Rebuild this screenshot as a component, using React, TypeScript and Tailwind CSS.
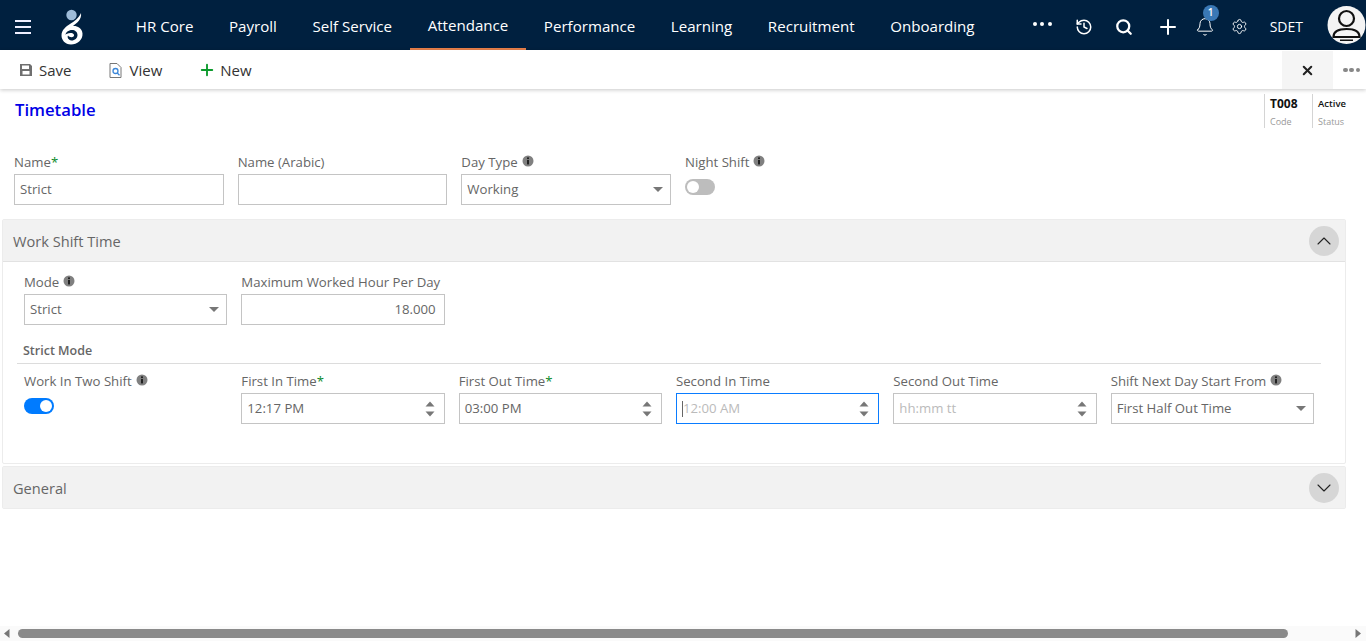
import React from "react";
import { ChevronDown, ChevronUp, History, Search, Plus, Bell, Settings, X } from "lucide-react";

const FONT = "font-['Open_Sans','Noto_Sans',sans-serif]";
const NAV = ["HR Core", "Payroll", "Self Service", "Attendance", "Performance", "Learning", "Recruitment", "Onboarding"];

function Info() {
  return (
    <svg width="12" height="12" viewBox="0 0 12 12" className="ml-[4px] shrink-0">
      <circle cx="6" cy="6" r="5.5" fill="#808080" />
      <rect x="5" y="2.4" width="2" height="1.7" fill="#222" />
      <rect x="5" y="5" width="2" height="4.4" fill="#222" />
    </svg>
  );
}

function Label({ text, req, info }: { text: string; req?: boolean; info?: boolean }) {
  return (
    <div className="flex h-[21px] items-start whitespace-nowrap text-[13.2px] leading-[18px] text-[#666]">
      <span>{text}</span>
      {req && <span className="text-[#0a8a2a]">*</span>}
      {info && <span className="mt-[2px]"><Info /></span>}
    </div>
  );
}

function Box({ children, focus }: { children?: React.ReactNode; focus?: boolean }) {
  return (
    <div className={`flex h-[31px] items-center border px-[5px] text-[13.2px] text-[#666] ${focus ? "border-[#0a7cff]" : "border-[#c4c4c4]"}`}>
      {children}
    </div>
  );
}

function Caret() {
  return (
    <svg width="10" height="5" viewBox="0 0 10 5" className="ml-auto mr-[2px] shrink-0">
      <path d="M0 0H10L5 5Z" fill="#777" />
    </svg>
  );
}

function Spin() {
  return (
    <svg width="10" height="16" viewBox="0 0 10 16" className="ml-auto mr-[4px] shrink-0">
      <path d="M0.5 5.500L5 0.500L9.500 5.500Z" fill="#777" />
      <path d="M0.5 10.500H9.500L5 15.500Z" fill="#777" />
    </svg>
  );
}

function Toggle({ on }: { on?: boolean }) {
  return (
    <div className={`flex h-[16px] w-[30px] items-center rounded-full px-[2px] ${on ? "justify-end bg-[#007bff]" : "justify-start bg-[#bdbdbd]"}`}>
      <div className="h-[12px] w-[12px] rounded-full bg-white" />
    </div>
  );
}

function PanelHeader({ title, open }: { title: string; open?: boolean }) {
  return (
    <div className={`flex items-center bg-[#f2f2f2] pl-[10px] pr-[6px] ${open ? "h-[42px] border-b border-[#e2e2e2]" : "h-[41px]"}`}>
      <span className="pt-[2px] text-[14.600px] text-[#666]">{title}</span>
      <div className="ml-auto flex h-[30px] w-[30px] items-center justify-center rounded-full bg-[#d6d6d6]">
        {open ? <ChevronUp size={24} strokeWidth={1.100} color="#222" /> : <ChevronDown size={24} strokeWidth={1.100} color="#222" />}
      </div>
    </div>
  );
}

function Logo() {
  return (
    <svg width="30" height="40" viewBox="0 0 30 40" className="shrink-0">
      <circle cx="13.5" cy="10" r="5.200" fill="#9dbbd8" />
      <path
        d="M23 8C24 14 19 18 15 21C18 20.5 24 22 24.5 28.500C25 35 19 39.500 13 39.500C7 39.500 3.500 35 3.500 30.500C3.500 25 8 21.500 12 19C16 16.500 21 13 23 8ZM14 25C10.500 25 7.500 27.500 7.500 30C7.500 29 10 28 12.500 28C15.500 28 17 30 15.500 31.500C14 33 11 32 10 30.500C9 32 10 35 13.500 35.500C17 35.500 19.500 33 19.500 30C19.500 27 17 25 14 25Z"
        fill="#fff"
        fillRule="evenodd"
      />
    </svg>
  );
}

function Avatar() {
  return (
    <svg width="39" height="38" viewBox="0 0 39 38" className="shrink-0">
      <circle cx="19.500" cy="19" r="19" fill="#f4f4f4" />
      <circle cx="19.500" cy="12.500" r="7.500" fill="none" stroke="#111" strokeWidth="2.200" />
      <path d="M6.500 31C6.500 24.500 13 23 19.500 23C26 23 32.500 24.500 32.500 31Z" fill="none" stroke="#111" strokeWidth="2.200" />
      <rect x="13" y="33.500" width="13" height="1.500" fill="#111" />
    </svg>
  );
}

export default function App() {
  return (
    <div className={`flex h-[641px] w-[1366px] flex-col overflow-hidden bg-white ${FONT}`}>
      <header className="flex h-[50px] shrink-0 items-center bg-[#00203f] text-white">
        <div className="ml-[15px] mt-[3px] flex w-[16px] flex-col gap-[4px]">
          <div className="h-[2px] bg-[#eef]" />
          <div className="h-[2px] bg-[#eef]" />
          <div className="h-[2px] bg-[#eef]" />
        </div>
        <div className="ml-[27px]"><Logo /></div>
        <nav className="ml-[30px] flex h-full">
          {NAV.map((n) => (
            <div
              key={n}
              className={`flex h-full items-center whitespace-nowrap px-[17.800px] pt-[3px] text-[15.100px] ${n === "Attendance" ? "border-b-2 border-[#e8804a]" : ""}`}
            >
              {n}
            </div>
          ))}
        </nav>
        <div className="ml-auto flex h-full items-center pt-[3px]">
          <div className="mt-[-6px] flex gap-[3.500px]">
            <div className="h-[4px] w-[4px] rounded-full bg-white" />
            <div className="h-[4px] w-[4px] rounded-full bg-white" />
            <div className="h-[4px] w-[4px] rounded-full bg-white" />
          </div>
          <History size={18} strokeWidth={2} className="ml-[23px]" />
          <Search size={18} strokeWidth={3} className="ml-[22px]" />
          <Plus size={24} strokeWidth={2} className="ml-[23px]" />
          <div className="relative ml-[15px]">
            <Bell size={20} strokeWidth={1.200} />
            <div className="absolute left-[8px] top-[-12px] flex h-[16px] w-[16px] items-center justify-center rounded-full bg-[#3a78b5] text-[10px] font-semibold text-white">1</div>
          </div>
          <Settings size={17} strokeWidth={1.300} className="ml-[16px]" />
          <span className="ml-[22px] text-[14px]">SDET</span>
          <div className="ml-[24px] mt-[-3px]"><Avatar /></div>
        </div>
      </header>

      <div className="flex h-[39px] shrink-0 items-stretch bg-white pt-px text-[15px] text-[#333] shadow-[0_1px_4px_rgba(0,0,0,0.22)]">
        <div className="ml-[19px] flex items-center">
          <svg width="14" height="14" viewBox="0 0 14 14">
            <path fillRule="evenodd" d="M1 1H11L13 3V13H1ZM3 2.500V6H10V2.500ZM3.500 8V11.500H10.500V8Z" fill="#6f6f6f" />
          </svg>
          <span className="ml-[6px]">Save</span>
        </div>
        <div className="ml-[38px] flex items-center">
          <svg width="13" height="15" viewBox="0 0 13 15" fill="none">
            <path d="M1 .500H8L12 4.500V14.500H1Z" stroke="#777" />
            <circle cx="6.500" cy="8" r="2.500" stroke="#3b87d9" strokeWidth="1.300" />
            <path d="M8.300 10L10.500 12.200" stroke="#3b87d9" strokeWidth="1.300" />
          </svg>
          <span className="ml-[7px]">View</span>
        </div>
        <div className="ml-[36px] flex items-center">
          <Plus size={18} strokeWidth={2.500} color="#0b9a2c" />
          <span className="ml-[4px]">New</span>
        </div>
        <div className="ml-auto flex w-[51px] items-center justify-center bg-[#f5f5f5]">
          <X size={15} strokeWidth={3.300} color="#222" />
        </div>
        <div className="ml-[10px] mr-[6px] flex w-[17px] items-center justify-between">
          <div className="h-[4.500px] w-[4.500px] rounded-full bg-[#888]" />
          <div className="h-[4.500px] w-[4.500px] rounded-full bg-[#888]" />
          <div className="h-[4.500px] w-[4.500px] rounded-full bg-[#888]" />
        </div>
      </div>

      <main className="min-h-0 flex-1">
        <div className="flex h-[39px] items-start pl-[15px] pr-[14px]">
          <h1 className="mt-[9px] text-[16.700px] font-semibold leading-[24px] text-[#0000e6]">Timetable</h1>
          <div className="ml-auto mt-[5px] flex">
            <div className="h-[34px] w-[48px] border-l border-[#d4d4d4] pl-[5px] pt-[2px]">
              <div className="text-[12px] font-bold leading-[16px] text-[#111]">T008</div>
              <div className="mt-[3px] text-[9px] leading-[14px] text-[#999]">Code</div>
            </div>
            <div className="h-[34px] w-[40px] border-l border-[#d4d4d4] pl-[5px] pt-[2px]">
              <div className="text-[9.500px] font-semibold leading-[16px] text-[#111]">Active</div>
              <div className="mt-[3px] text-[9px] leading-[14px] text-[#999]">Status</div>
            </div>
          </div>
        </div>

        <div className="mt-[25px] grid grid-cols-6 gap-x-[14px] pl-[14px] pr-[24px]">
          <div><Label text="Name" req /><Box>Strict</Box></div>
          <div><Label text="Name (Arabic)" /><Box /></div>
          <div><Label text="Day Type" info /><Box>Working<Caret /></Box></div>
          <div><Label text="Night Shift" info /><div className="pt-[5px]"><Toggle /></div></div>
        </div>

        <section className="mx-[2px] mt-[14px] h-[245px] w-[1344px] rounded-[2px] border border-[#ececec]">
          <PanelHeader title="Work Shift Time" open />
          <div className="pl-[21px] pr-[31px] pt-[11px]">
            <div className="grid grid-cols-6 gap-x-[14px]">
              <div><Label text="Mode" info /><Box>Strict<Caret /></Box></div>
              <div><Label text="Maximum Worked Hour Per Day" /><Box><span className="ml-auto mr-[3px]">18.000</span></Box></div>
            </div>
            <div className="-ml-[7px] -mr-[7px] mt-[15px] flex h-[24px] items-center border-b border-[#dcdcdc] pl-[6px] text-[12.500px] font-semibold text-[#666]">
              Strict Mode
            </div>
            <div className="mt-[8px] grid grid-cols-6 gap-x-[14px]">
              <div><Label text="Work In Two Shift" info /><div className="pt-[5px]"><Toggle on /></div></div>
              <div><Label text="First In Time" req /><Box>12:17 PM<Spin /></Box></div>
              <div><Label text="First Out Time" req /><Box>03:00 PM<Spin /></Box></div>
              <div>
                <Label text="Second In Time" />
                <Box focus>
                  <span className="h-[16px] w-px bg-[#666]" />
                  <span className="text-[#bbb]">12:00 AM</span>
                  <Spin />
                </Box>
              </div>
              <div><Label text="Second Out Time" /><Box><span className="text-[#bbb]">hh:mm tt</span><Spin /></Box></div>
              <div><Label text="Shift Next Day Start From" info /><Box>First Half Out Time<Caret /></Box></div>
            </div>
          </div>
        </section>

        <section className="mx-[2px] mt-[2px] w-[1344px] rounded-[2px] border border-[#ececec]">
          <PanelHeader title="General" />
        </section>
      </main>

      <div className="flex h-[15px] shrink-0 items-center bg-[#fafafa]">
        <svg width="6" height="9" viewBox="0 0 6 9" className="ml-[4px] shrink-0"><path d="M5.500 0V9L0 4.500Z" fill="#777" /></svg>
        <div className="ml-[8px] h-[9px] w-[1270px] rounded-full bg-[#8a8a8a]" />
        <svg width="6" height="9" viewBox="0 0 6 9" className="ml-auto mr-[5px] shrink-0"><path d="M0.500 0V9L6 4.500Z" fill="#777" /></svg>
      </div>
    </div>
  );
}
